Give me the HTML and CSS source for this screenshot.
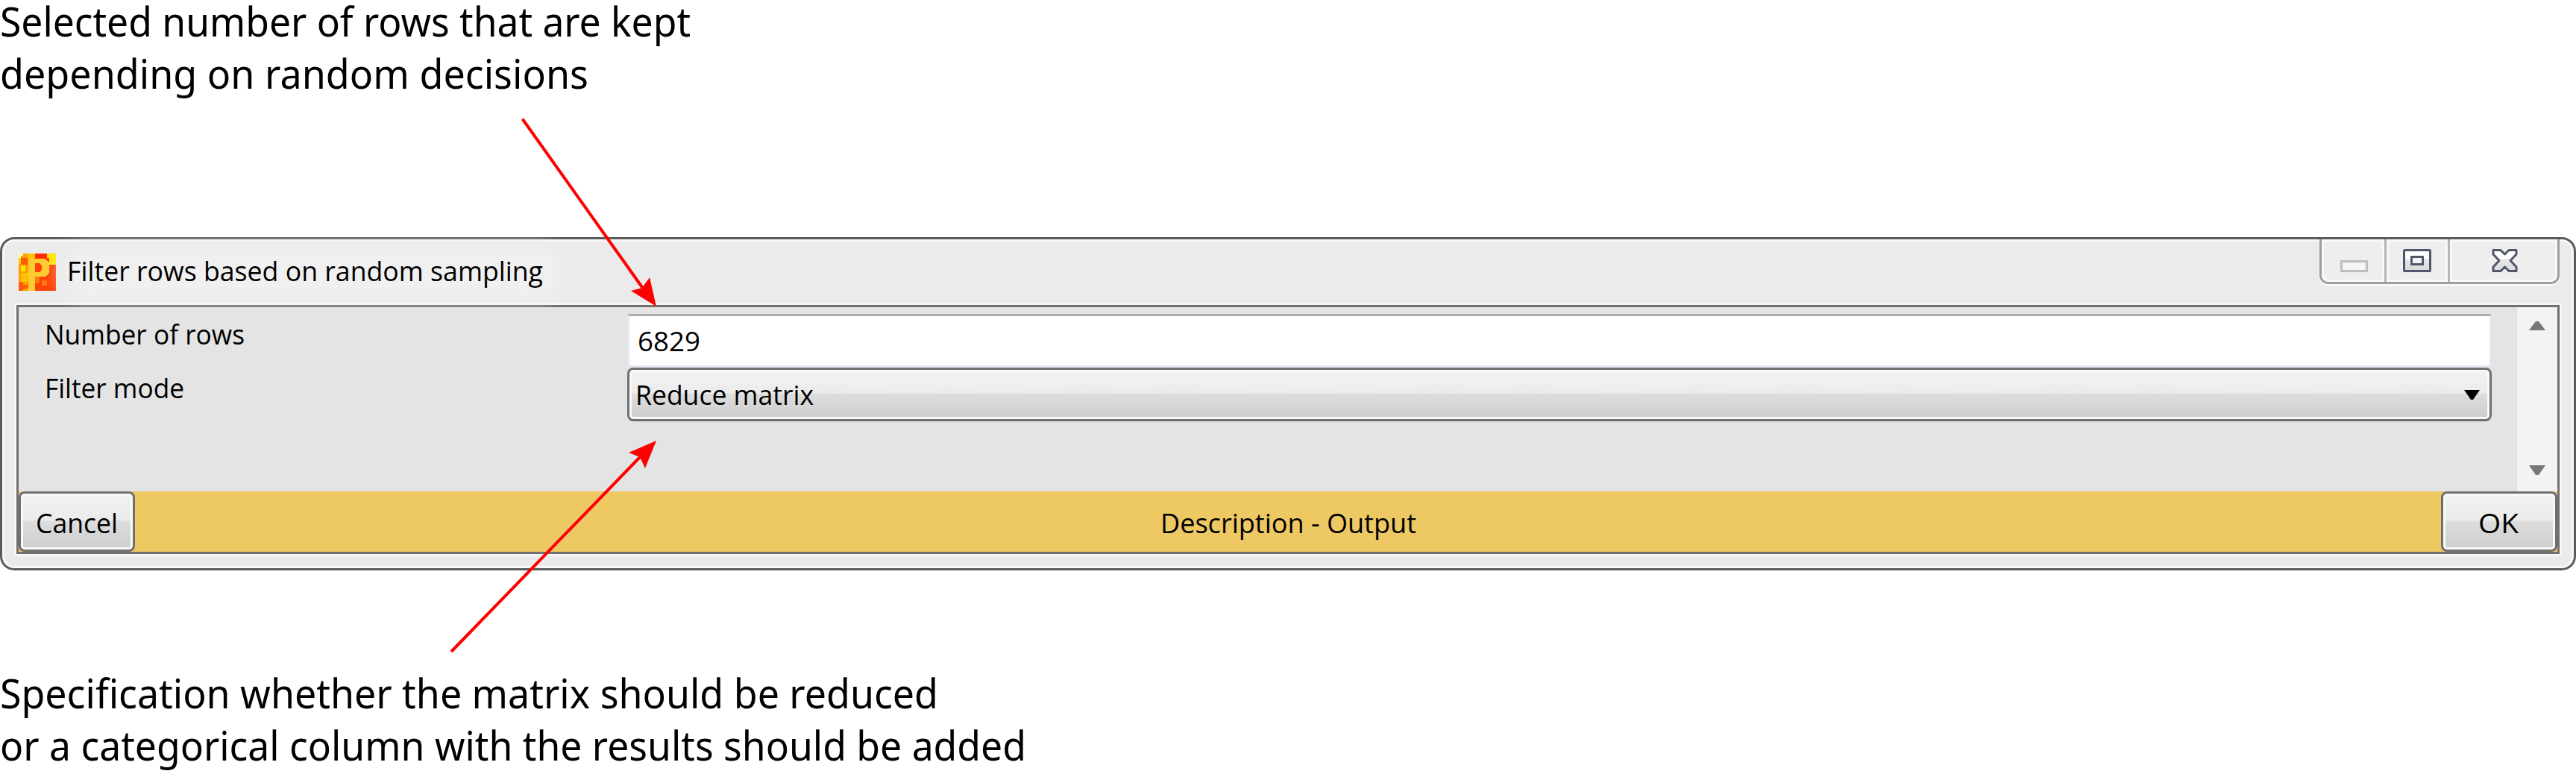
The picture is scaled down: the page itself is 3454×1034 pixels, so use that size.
FILE: index.html
```html
<!DOCTYPE html>
<html lang="en">
<head>
<meta charset="utf-8">
<title>Filter rows based on random sampling</title>
<link rel="stylesheet" href="styles.css">
</head>
<body>
<main class="figure">
  <section class="note note-top">
    <svg class="note-line" width="1400" height="70"><text x="0" y="49" textLength="926" lengthAdjust="spacingAndGlyphs">Selected number of rows that are kept</text></svg>
    <svg class="note-line" width="1400" height="70"><text x="0" y="49" textLength="789" lengthAdjust="spacingAndGlyphs">depending on random decisions</text></svg>
  </section>

  <section class="window">
    <header class="titlebar">
      <svg class="app-icon" viewBox="0 0 50 50">
        <rect width="50" height="50" fill="#ff4208"/>
        <path fill="#ff9c00" d="M0 0H22V50H0z"/>
        <path fill="#ffc400" d="M0 6H6V14H0zM12 0H22V7H12zM3 26H12V38H3zM12 22H18V30H12z"/>
        <path fill="#ffffa0" d="M0 0H6V3H3V6H0z"/>
        <path fill="#ff5a08" d="M3 6H12V15H3zM0 38H6V50H0zM6 42H14V47H6z"/>
        <path fill="#ffe400" d="M38 0H50V15H41V6H38zM3 16H9V24H3z"/>
        <path fill="#ff2a00" d="M22 0H38V6H22z"/>
        <path fill="#ff7a10" d="M31 36H38V43H31zM22 31H28V40H22z"/>
        <path fill="#ffcb33" fill-rule="evenodd" d="M13 7H35L41 12V26L36 31H22V50H13zM22 13V25H28L31 22V16L28 13z"/>
      </svg>
      <svg class="label title" width="650" height="50"><text x="-2" y="37" textLength="638" lengthAdjust="spacingAndGlyphs">Filter rows based on random sampling</text></svg>
      <div class="controls">
        <div class="control min"><svg width="38" height="16"><rect x="1.5" y="1.5" width="34" height="13" fill="#f5f5f5" stroke="#bebebe" stroke-width="3"/></svg></div>
        <div class="control max"><svg width="38" height="31"><rect x="1.5" y="1.5" width="35" height="28" rx="1" fill="url(#glyph)" stroke="#52566a" stroke-width="3"/><rect x="11.5" y="10.5" width="15" height="10" fill="#f5f5f5" stroke="#52566a" stroke-width="3"/></svg></div>
        <div class="control close"><svg width="35" height="31"><defs><linearGradient id="glyph" x2="0" y2="1"><stop offset=".4" stop-color="#fff"/><stop offset=".45" stop-color="#e8e8e8"/><stop offset="1" stop-color="#dadada"/></linearGradient></defs><path d="M2 1.5H12L17.5 7L23 1.5H33V7L25 15.5L33 24V29.5H23L17.5 24L12 29.5H2V24L10 15.5L2 7z" fill="url(#glyph)" stroke="#52566a" stroke-width="3" stroke-linejoin="round"/></svg></div>
      </div>
    </header>

    <div class="client">
      <div class="content">
        <div class="form">
          <div class="row">
            <svg class="label name" width="816" height="72"><text x="35" y="41" textLength="268" lengthAdjust="spacingAndGlyphs">Number of rows</text></svg>
            <div class="textbox"><svg class="label" width="200" height="66"><text x="11" y="47" textLength="84" lengthAdjust="spacingAndGlyphs">6829</text></svg></div>
          </div>
          <div class="row">
            <svg class="label name" width="816" height="72"><text x="35" y="41" textLength="187" lengthAdjust="spacingAndGlyphs">Filter mode</text></svg>
            <div class="combo"><svg class="label" width="400" height="66"><text x="8" y="47" textLength="239" lengthAdjust="spacingAndGlyphs">Reduce matrix</text></svg><svg class="caret" width="21" height="13"><path d="M0 0H21L12 13H9z"/></svg></div>
          </div>
        </div>
        <div class="scrollbar">
          <svg width="22" height="12"><path d="M0 12L9 0H13L22 12z"/></svg>
          <svg width="22" height="13"><path d="M0 0H22L13 13H9z"/></svg>
        </div>
      </div>
      <footer class="footer">
        <div class="button cancel"><svg class="label" width="150" height="75"><text x="20" y="53" textLength="110" lengthAdjust="spacingAndGlyphs">Cancel</text></svg></div>
        <svg class="label" width="360" height="81"><text x="9" y="56" textLength="343" lengthAdjust="spacingAndGlyphs">Description - Output</text></svg>
        <div class="button ok"><svg class="label" width="150" height="75"><text x="47" y="53" textLength="54" lengthAdjust="spacingAndGlyphs">OK</text></svg></div>
      </footer>
    </div>
  </section>

  <section class="note note-bottom">
    <svg class="note-line" width="1400" height="70"><text x="0" y="49" textLength="1258" lengthAdjust="spacingAndGlyphs">Specification whether the matrix should be reduced</text></svg>
    <svg class="note-line" width="1400" height="70"><text x="0" y="49" textLength="1376" lengthAdjust="spacingAndGlyphs">or a categorical column with the results should be added</text></svg>
  </section>

  <svg class="arrows" width="3454" height="1034">
    <path class="shaft" d="M700.5 159.500L863 388M605 874L859 612"/>
    <path class="head" d="M880 411L846 390L861 386L871 372zM880 591L843 607L858 613L865 628z"/>
  </svg>
</main>
</body>
</html>
```
FILE: styles.css
```css
* { box-sizing: border-box; }
body { margin: 0; background: #fff; }
svg { display: block; flex: none; }
text { fill: #000; }

.figure {
  position: relative;
  width: 3454px;
  height: 1034px;
  overflow: hidden;
  display: flex;
  flex-direction: column;
}
.note { flex: none; font: 55px "Noto Sans", "Open Sans", sans-serif; }
.note-top { height: 318px; }
.note-bottom { padding-top: 136px; }
.note-line { overflow: visible; }
.label { font: 37px "Open Sans", "Noto Sans", sans-serif; overflow: visible; }

.window {
  flex: none;
  height: 447px;
  padding: 0 19px 19px;
  border: 3px solid #5c5c5c;
  border-radius: 19px;
  background: #ebebeb;
  box-shadow: inset 0 0 0 3px #f8f8f8;
}
.titlebar {
  height: 88px;
  display: flex;
  align-items: flex-start;
  padding-left: 3px;
}
.app-icon { width: 50px; height: 50px; margin-top: 19px; }
.title { margin: 19px 0 0 17px; border-radius: 25px; background: #f0f0f0; box-shadow: 0 0 22px 10px #f0f0f0; }
.controls {
  display: flex;
  width: 322px;
  height: 60px;
  margin-left: auto;
  border: 3px solid #9e9e9e;
  border-top: 0;
  border-radius: 0 0 12px 12px;
  box-shadow: 0 3px 0 #f6f6f6;
}
.control { box-shadow: inset 0 0 0 3px #f8f8f8; background: #eee; }
.control + .control { border-left: 3px solid #b5b5b5; }
.min { width: 84px; padding: 28px 0 0 25px; border-bottom-left-radius: 9px; }
.max { width: 85px; padding: 13px 0 0 22px; }
.close { flex: 1; padding: 13px 0 0 56px; border-bottom-right-radius: 9px; }

.client {
  height: 334px;
  border: 3px solid #707070;
  box-shadow: 0 0 0 3px #f6f6f6;
  display: flex;
  flex-direction: column;
}
.content { flex: 1; display: flex; background: #e4e4e4; }
.form { flex: 1; padding: 9px 34px 0 0; }
.row { display: flex; height: 72px; }
.textbox {
  flex: 1;
  border: 3px solid #e2e8ef;
  border-top-color: #abadb3;
  background: #fff;
}
.combo {
  flex: 1;
  display: flex;
  align-items: center;
  justify-content: space-between;
  padding-right: 13px;
}
.combo, .button {
  border: 3px solid #707070;
  border-radius: 8px;
  background: linear-gradient(#f3f3f3, #ebebeb 48%, #dddddd 49%, #cdcdcd);
  box-shadow: inset 0 0 0 3px #f9f9f9;
}
.scrollbar {
  width: 54px;
  padding: 19px 0 22px;
  display: flex;
  flex-direction: column;
  align-items: center;
  justify-content: space-between;
  background: #f3f3f3;
  fill: #777;
}
.footer {
  height: 81px;
  display: flex;
  justify-content: space-between;
  background: #edc863;
}
.button { width: 156px; }

.arrows { position: absolute; left: 0; top: 0; }
.shaft { stroke: #f00; stroke-width: 4; fill: none; }
.head { fill: #f00; }
```
